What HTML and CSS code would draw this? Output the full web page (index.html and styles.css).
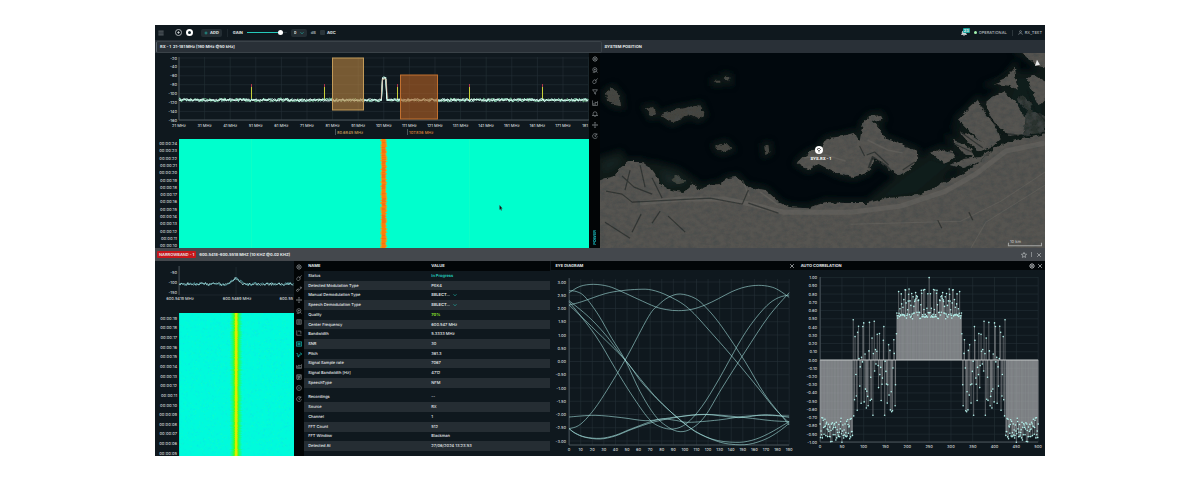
FILE: index.html
```html
<!DOCTYPE html>
<html lang="en">
<head>
<meta charset="utf-8">
<meta name="viewport" content="width=device-width, initial-scale=1">
<title>Spectrum monitor</title>
<link rel="stylesheet" href="styles.css">
</head>
<body>
<svg class="sprite" aria-hidden="true">
  <symbol id="i-gear" viewBox="0 0 16 16"><circle cx="8" cy="8" r="5.5"/><circle cx="8" cy="8" r="2.2"/><path d="M8 1v2M8 13v2M1 8h2M13 8h2M3 3l1.5 1.5M11.500 11.500L13 13M13 3l-1.500 1.500M4.500 11.500L3 13"/></symbol>
  <symbol id="i-zoom" viewBox="0 0 16 16"><circle cx="7.500" cy="7" r="5.500"/><path d="M11.500 11l3 4M2 14h7M7.500 4.500v5M5 7h5"/></symbol>
  <symbol id="i-sweep" viewBox="0 0 16 16"><path d="M15 1L9 8M9 5c-4-1-7 2-7 6 0 2 1 4 3 4 4 0 7-3 6-7z"/></symbol>
  <symbol id="i-filter" viewBox="0 0 16 16"><path d="M1.500 2h13L9.500 8.500V14l-3-2V8.500z"/></symbol>
  <symbol id="i-chart" viewBox="0 0 16 16"><path d="M1.500 1v13.500H15M5 14V8M8.500 14V5l3 3 3-4v10"/></symbol>
  <symbol id="i-bell" viewBox="0 0 16 16"><path d="M3 12V7a5 5 0 0 1 10 0v5h2H1zM6 15h4"/></symbol>
  <symbol id="i-move" viewBox="0 0 16 16"><path d="M8 1v14M1 8h14M6 3l2-2 2 2M6 13l2 2 2-2M3 6L1 8l2 2M13 6l2 2-2 2"/></symbol>
  <symbol id="i-reset" viewBox="0 0 16 16"><path d="M13 4A6.500 6.500 0 1 0 14.500 9M13 1v4H9M8 5v4h3"/></symbol>
  <symbol id="i-tune" viewBox="0 0 16 16"><path d="M1 12l5-5 3 4 5-8M10 3h4v4"/><circle cx="4" cy="12" r="2.500"/></symbol>
  <symbol id="i-list" viewBox="0 0 16 16"><path d="M2 2h12v12H2zM4 5h8M4 8h8M4 11h8"/></symbol>
  <symbol id="i-axes" viewBox="0 0 16 16"><path d="M2 1v13h13M5 3h8v7"/></symbol>
  <symbol id="i-eye" viewBox="0 0 16 16"><path d="M1 2h14v12H1zM1 5c6 0 8 6 14 6M1 11c6 0 8-6 14-6M8 2v12"/></symbol>
  <symbol id="i-link" viewBox="0 0 16 16"><path d="M1 4h3l3 9 4-8h4M11 1l4 4M3 9l4 5M12 9l3-3"/></symbol>
  <symbol id="i-bars" viewBox="0 0 16 16"><path d="M1 14h14V4l-4 4-3-3-3 4-4-2zM5 14v-4M8 14V7M11 14v-4"/></symbol>
  <symbol id="i-grid" viewBox="0 0 16 16"><path d="M2 2h12v12H2zM2 8h12M8 2v12M4 15l9-12M3 4l4 3"/></symbol>
  <symbol id="i-minus" viewBox="0 0 16 16"><circle cx="8" cy="8" r="6.500"/><path d="M4.500 8h7"/></symbol>
  <symbol id="i-x" viewBox="0 0 16 16"><path d="M3 3l10 10M13 3L3 13"/></symbol>
  <symbol id="i-down" viewBox="0 0 16 16"><path d="M2 5l6 6 6-6"/></symbol>
  <symbol id="i-user" viewBox="0 0 16 16"><circle cx="8" cy="5" r="3"/><path d="M2 15c0-4 3-5 6-5s6 1 6 5"/></symbol>
  <symbol id="i-menu" viewBox="0 0 16 16"><path d="M1 3h14M1 8h14M1 13h14"/></symbol>
  <symbol id="i-plus" viewBox="0 0 16 16"><path d="M8 2v12M2 8h12"/></symbol>
  <symbol id="i-add" viewBox="0 0 16 16"><circle cx="8" cy="8" r="7"/><path d="M8 5v6M5 8h6"/></symbol>
  <symbol id="i-star" viewBox="0 0 16 16"><path d="M8 1l2 4.500 5 .5-4 3.500 1.200 5L8 12l-4.200 2.500L5 9.500 1 6l5-.5z"/></symbol>
</svg>

<main class="app">
  <header class="topbar">
    <button class="btn menu" aria-label="Menu"><svg class="ic dim"><use href="#i-menu"/></svg></button>
    <div class="transport">
      <button class="btn" aria-label="New receiver"><svg class="ic l"><use href="#i-add"/></svg></button>
      <button class="btn stop" aria-label="Stop"></button>
    </div>
    <button class="btn add"><svg class="ic s teal"><use href="#i-plus"/></svg>ADD</button>
    <div class="gain">
      <label for="gain">GAIN</label>
      <input id="gain" class="slider" type="range" min="0" max="100" value="90">
      <div class="pick boxed"><select aria-label="Gain in dB"><option>0</option></select><svg class="ic s teal"><use href="#i-down"/></svg></div>
      <span class="muted">dB</span>
      <label class="agc"><input type="checkbox">AGC</label>
    </div>
    <div class="status">
      <button class="btn alerts" aria-label="Notifications"><svg class="ic"><use href="#i-bell"/></svg><span class="badge">23</span></button>
      <span class="online">OPERATIONAL</span>
      <span class="user"><svg class="ic"><use href="#i-user"/></svg>RX_TEST</span>
    </div>
  </header>

  <div class="strip">
    <h2 class="rx">RX - 1&nbsp; 21-181 MHz [160 MHz @50 kHz]</h2>
    <h2 class="pos">SYSTEM POSITION</h2>
  </div>

  <section class="upper">
    <div class="wide">
      <svg class="plot" id="wide" viewBox="0 0 434 195" role="img" aria-label="Wideband spectrum and waterfall"></svg>
      <nav class="tools">
        <button class="btn" aria-label="Settings"><svg class="ic"><use href="#i-gear"/></svg></button>
        <button class="btn" aria-label="Zoom"><svg class="ic"><use href="#i-zoom"/></svg></button>
        <button class="btn" aria-label="Clear"><svg class="ic"><use href="#i-sweep"/></svg></button>
        <button class="btn" aria-label="Filter"><svg class="ic"><use href="#i-filter"/></svg></button>
        <button class="btn" aria-label="Chart"><svg class="ic"><use href="#i-chart"/></svg></button>
        <button class="btn" aria-label="Alarm"><svg class="ic"><use href="#i-bell"/></svg></button>
        <button class="btn" aria-label="Move"><svg class="ic"><use href="#i-move"/></svg></button>
        <button class="btn" aria-label="Reset"><svg class="ic"><use href="#i-reset"/></svg></button>
        <button class="btn power">POWER</button>
      </nav>
    </div>
    <svg class="map" viewBox="600 53 444 195" preserveAspectRatio="xMidYMid slice" role="img" aria-label="Satellite map">
      <defs>
        <filter id="ground" x="-5%" y="-5%" width="110%" height="110%">
          <feTurbulence type="fractalNoise" baseFrequency=".16 .22" numOctaves="4" seed="8" result="n"/>
          <feDisplacementMap in="SourceGraphic" in2="n" scale="5" xChannelSelector="R" yChannelSelector="G" result="d"/>
          <feColorMatrix in="n" type="matrix" values="0 0 0 0 0.06  0 0 0 0 .07  0 0 0 0 .07  1.400 0 0 0 -.5" result="k"/>
          <feComposite in="k" in2="d" operator="in" result="t"/>
          <feMerge result="m"><feMergeNode in="d"/><feMergeNode in="t"/></feMerge>
          <feGaussianBlur in="m" stdDeviation=".35"/>
        </filter>
        <filter id="soft" x="-20%" y="-20%" width="140%" height="140%"><feGaussianBlur stdDeviation="3"/></filter>
        <filter id="fine"><feGaussianBlur stdDeviation=".6"/></filter>
        <path id="coast" d="M596 182L606 178 615 176 620 168 628 162 642 162 649 167 655 175 660 184 670 190 683 192 689 188 693 183 698 190 710 185 719 184 728 178 737 177 741 182 747 187 765 190 772 196 778 202 788 207 808 208 825 202 845 203 867 203 887 198 917 195 930 189 943 183 958 176 980 161 993 148 1007 142 1050 133V252H596z"/>
        <path id="isle" d="M797 163L803 157 810 152 820 148 824 141 830 138 842 136 853 133 859 142 861 130 863 122 870 116 880 115 882 119 872 121 878 127 883 138 895 142 907 147 916 151 917 159 910 169 900 175 888 169 873 158 870 169 865 173 853 177 838 174 830 170 818 164 808 170z"/>
        <path id="north" d="M957 119L965 111 977 100 981 108 990 120 997 131 1000 139 990 148 983 144 972 134zM984 104L992 97 1002 92 1014 101 1022 114 1028 122 1024 134 1008 136 994 124zM993 84L1003 80 1013 68 1014 76 1017 90 1008 86zM1026 78L1032 75 1048 84V95L1038 106 1033 96zM1020 53L1050 50V69L1036 66 1028 58z"/>
        <path id="piers" d="M930 153L940 149 952 152 954 159 943 164zM951 140L960 142 970 149 974 158 962 153zM958 131L972 136 990 148 980 152 968 143zM950 165L962 159 980 157 992 149 978 162 963 168z"/>
        <path id="islets" d="M606 92L613 88 620 96 621 106 614 105 607 100zM646 108L653 107 656 114 651 117zM660 115L674 110 684 108 700 105 704 115 698 119 690 115 680 119 672 123zM714 81h6v2h-6zM725 76l4 1v5l-4-2zM715 146l10-3 6 6-8 3-6-2zM764 146l4-1 1 7-4 2z"/>
      </defs>
      <rect x="595" y="48" width="454" height="205" fill="#01080d"/>
      <g filter="url(#soft)" fill="#182523" stroke="#14211f" stroke-width="7" opacity=".7">
        <use href="#coast"/><use href="#isle"/><use href="#north"/><use href="#piers"/>
        <use href="#islets" stroke-width="7"/>
        <path d="M867 203l40-32 30-20 20 10-40 34z"/>
        <path d="M1015 75l29 0v58l-20 8-25-20z"/>
        <path d="M655 165l22 6 20 14-34 4zM600 160l20-6 5 10-25 14z" fill="#20302d"/>
      </g>
      <g filter="url(#ground)" fill="#575551">
        <use href="#coast"/><use href="#isle"/><use href="#north"/><use href="#piers"/>
        <use href="#islets" fill="#45443f"/>
        <path d="M670 180l6-5 10 7-8 2z" fill="#3d423b"/>
        <path d="M1026 108l18 8v16l-22 4zM1020 94l12 10-4 8-12-12z" fill="#2b302e"/>
      </g>
      <g fill="none" stroke="#706d67" stroke-width="1.500" opacity=".4" filter="url(#fine)" stroke-linejoin="round">
        <path d="M640 203L680 199 725 199 750 204 783 212 815 212 850 212 900 206 945 191 975 174 1005 151 1044 143" stroke-width="5"/>
        <path d="M850 224L960 221 1000 201 1044 172M1044 185L985 222 970 248" stroke-width="1"/>
        <path d="M804 158L825 155 845 161M867 140l20 10 15 3"/>
        <path d="M742 180l7 16M760 192l18 13"/>
      </g>
      <g fill="none" stroke="#101716" stroke-width="1.200" opacity=".5" filter="url(#fine)" stroke-linejoin="round">
        <path d="M606 191L622 194 632 202 710 198 742 204 748 190M668 216l17 16M605 222l25 16M641 214l-9 18M622 176l12 11 18 7M630 170l-5 20M640 165l5 22M652 178l10 20M748 203l30 10"/>
        <path d="M868 168l4-11 14 9 8 9" stroke-width="2"/>
        <path d="M866 155l8-3 14 13M902 170l12-8M859 146l5 10M930 160l14 4 16-5M938 148l20 7M950 142l23 11M957 130l25 18M1026 90l8 20 14 15"/>
        <path d="M980 104l20 29 20 3M993 80l20-14" stroke-width="2"/>
        <path d="M937 220l4 8M968 212l4 8M660 211l-8 12"/>
      </g>
      <path d="M1034 66l2-6 3 5z" fill="#e8eaea"/>
      <circle cx="818.500" cy="150" r="4" fill="#fff"/>
      <path d="M816.500 149l2 2 2-2M818.500 151v1.500M817 148.500h2.500" fill="none" stroke="#333" stroke-width=".7"/>
      <text x="810" y="159.500" class="mark">SYS.RX - 1</text>
      <path d="M1007.500 242.500v3h33v-3" fill="none" stroke="#a5a7a5" stroke-width="1"/>
      <text x="1009" y="242.500" class="scale">10 km</text>
    </svg>
  </section>

  <div class="strip narrowhead">
    <span class="tag">NARROWBAND - 1</span>
    <h2>600.5418-600.5518 MHZ [10 KHZ @0.02 KHZ]</h2>
    <div class="winbtns">
      <button class="btn" aria-label="Favourite"><svg class="ic"><use href="#i-star"/></svg></button>
      <span class="bar"></span>
      <button class="btn" aria-label="Close"><svg class="ic"><use href="#i-x"/></svg></button>
    </div>
  </div>

  <section class="lower">
    <svg class="plot" id="narrow" viewBox="0 0 139 195" role="img" aria-label="Narrowband spectrum and waterfall"></svg>
    <nav class="tools tight">
      <button class="btn" aria-label="Settings"><svg class="ic"><use href="#i-gear"/></svg></button>
      <button class="btn" aria-label="Clear"><svg class="ic"><use href="#i-sweep"/></svg></button>
      <button class="btn" aria-label="Tune"><svg class="ic"><use href="#i-tune"/></svg></button>
      <button class="btn" aria-label="Move"><svg class="ic"><use href="#i-move"/></svg></button>
      <button class="btn" aria-label="Zoom"><svg class="ic"><use href="#i-zoom"/></svg></button>
      <button class="btn" aria-label="Info"><svg class="ic"><use href="#i-list"/></svg></button>
      <button class="btn" aria-label="Axes"><svg class="ic"><use href="#i-axes"/></svg></button>
      <button class="btn on" aria-label="Eye diagram"><svg class="ic"><use href="#i-eye"/></svg></button>
      <button class="btn on" aria-label="Correlation"><svg class="ic"><use href="#i-link"/></svg></button>
      <button class="btn" aria-label="Histogram"><svg class="ic"><use href="#i-bars"/></svg></button>
      <button class="btn" aria-label="Constellation"><svg class="ic"><use href="#i-grid"/></svg></button>
      <button class="btn" aria-label="Mute"><svg class="ic"><use href="#i-minus"/></svg></button>
      <button class="btn" aria-label="Reset"><svg class="ic"><use href="#i-reset"/></svg></button>
    </nav>
    <table class="info">
      <thead><tr><th scope="col">NAME</th><th scope="col">VALUE</th></tr></thead>
      <tbody>
        <tr><td>Status</td><td class="teal strong">In Progress</td></tr>
        <tr><td>Detected Modulation Type</td><td>PSK4</td></tr>
        <tr><td><label for="md">Manual Demodulation Type</label></td><td class="pick"><select id="md"><option>SELECT...</option></select><svg class="ic s teal"><use href="#i-down"/></svg></td></tr>
        <tr><td><label for="sd">Speech Demodulation Type</label></td><td class="pick"><select id="sd"><option>SELECT...</option></select><svg class="ic s teal"><use href="#i-down"/></svg></td></tr>
        <tr><td>Quality</td><td class="lime strong">70%</td></tr>
        <tr><td>Center Frequency</td><td>600.547 MHz</td></tr>
        <tr><td>Bandwidth</td><td>5.3333 MHz</td></tr>
        <tr><td>SNR</td><td>30</td></tr>
        <tr><td>Pitch</td><td>361.3</td></tr>
        <tr><td>Signal Sample rate</td><td>7067</td></tr>
        <tr><td>Signal Bandwidth [Hz]</td><td>4712</td></tr>
        <tr><td>SpeechType</td><td>NFM</td></tr>
        <tr class="gap"><td>Recordings</td><td>--</td></tr>
        <tr><td>Source</td><td>RX</td></tr>
        <tr><td>Channel</td><td>1</td></tr>
        <tr><td>FFT Count</td><td>512</td></tr>
        <tr><td>FFT Window</td><td>Blackman</td></tr>
        <tr><td>Detected At</td><td>27/06/2024 13:23:53</td></tr>
      </tbody>
    </table>
    <article class="panel">
      <header><h3>EYE DIAGRAM</h3><button class="btn" aria-label="Close"><svg class="ic"><use href="#i-x"/></svg></button></header>
      <svg class="plot" id="eye" viewBox="0 0 245 186" role="img" aria-label="Eye diagram"></svg>
    </article>
    <article class="panel">
      <header><h3>AUTO CORRELATION</h3><button class="btn" aria-label="Settings"><svg class="ic"><use href="#i-gear"/></svg></button><button class="btn" aria-label="Close"><svg class="ic"><use href="#i-x"/></svg></button></header>
      <svg class="plot" id="auto" viewBox="0 0 248 186" role="img" aria-label="Auto correlation"></svg>
    </article>
  </section>
</main>
<script src="charts.js"></script>
</body>
</html>
```

FILE: styles.css
```css
* { box-sizing: border-box; }

body {
  margin: 0;
  padding: 25px 155px;
  background: #fff;
  color: #e4e8ea;
  font: 500 4px/6px Inter, "Liberation Sans", sans-serif;
  text-rendering: geometricPrecision;
}

h2, h3 { margin: 0; font-size: 4px; line-height: 6px; font-weight: 700; }

.sprite { display: none; }

.app {
  display: grid;
  grid-template-rows: 15px 13px minmax(0, 1fr) 13px minmax(0, 1fr);
  height: calc(100vh - 50px);
  min-height: 320px;
  background: #0f181e;
}

.btn {
  display: flex;
  align-items: center;
  justify-content: center;
  padding: 0;
  border: 0;
  background: none;
  color: inherit;
  font: inherit;
  text-rendering: inherit;
  cursor: pointer;
}

.ic {
  flex: none;
  width: 6px;
  height: 6px;
  fill: none;
  stroke: currentColor;
  stroke-width: 1.6;
}
.ic.s { width: 4px; height: 4px; stroke-width: 2.400; }
.ic.l { width: 7px; height: 7px; }
.teal { color: #22c3b6; }
.lime { color: #8be32a; }
.dim, .muted { color: #98a0a4; }
.strong { font-weight: 700; }

/* Top bar */
.topbar { display: flex; align-items: center; padding: 0 3px; }
.menu { margin-right: 11px; }
.transport { display: flex; gap: 4px; align-items: center; padding-right: 8px; }
.stop { width: 7px; height: 7px; border: 2px solid #fff; border-radius: 50%; background: #14242b; }
.add { gap: 2px; padding: 0 3px; height: 8px; border-radius: 2px; background: #232d33; font-weight: 700; }
.gain { display: flex; align-items: center; gap: 4px; margin-left: 5px; padding-left: 5px; border-left: 1px solid #1d272d; font-weight: 700; }

.slider { appearance: none; width: 40px; height: 5px; margin: 0; background: linear-gradient(#25c9ba, #25c9ba) 0 50% / 34px 1px no-repeat, linear-gradient(#27343a, #27343a) 0 50% / 100% 1px no-repeat; }
.slider::-webkit-slider-thumb { appearance: none; width: 5px; height: 5px; border-radius: 50%; background: #fff; }

.pick { display: flex; align-items: center; gap: 3px; }
.pick select { appearance: none; border: 0; padding: 0; margin: 0; background: none; color: inherit; font: inherit; font-weight: 600; text-rendering: inherit; }
.boxed { height: 8px; padding: 0 3px; border-radius: 2px; background: #232d33; }

.agc { display: flex; align-items: center; gap: 2px; }
.agc input { appearance: none; width: 5px; height: 5px; margin: 0; border-radius: 1px; background: #2a343a; }

.status { display: flex; align-items: center; margin-left: auto; }
.alerts { position: relative; margin-right: 7px; }
.alerts .ic { fill: #cfd5d6; }
.badge { position: absolute; left: 2px; top: -2px; padding: 0 1px; border-radius: 1px; background: #1ba39c; line-height: 5px; font-weight: 700; }
.online { display: flex; align-items: center; gap: 2px; padding-right: 5px; border-right: 1px solid #2c363b; color: #aeb5b8; }
.online::before { content: ""; width: 3px; height: 3px; border-radius: 50%; background: #a3f4b0; }
.user { display: flex; align-items: center; gap: 2px; padding-left: 5px; color: #aeb5b8; }
.user .ic { width: 5px; height: 5px; }

/* Title strips */
.strip { display: flex; align-items: center; background: #293037; }
.strip .rx, .strip .pos { flex: 1; padding: 2px 3px; }
.rx { border: 1px solid #3a4248; border-left-color: #59626a; border-radius: 2px; margin-left: 1px; }
.narrowhead { gap: 3px; padding: 0 3px 0 2px; background: #44484d; }
.tag { padding: 0 2px; height: 7px; line-height: 7px; border-radius: 1px; background: #c8161b; font-weight: 600; }
.winbtns { display: flex; align-items: center; gap: 4px; margin-left: auto; color: #c5c8ca; }
.bar { width: 1px; height: 5px; background: #85898c; }

/* Upper half */
.upper { display: grid; grid-template-columns: 1fr 1fr; min-height: 0; }
.wide { display: flex; min-width: 0; min-height: 0; }
.plot { flex: 1; display: block; min-width: 0; min-height: 0; width: 100%; height: 100%; }
.map { display: block; width: 100%; height: 100%; }

.tools { flex: none; display: flex; flex-direction: column; align-items: center; gap: 5px; width: 11px; padding: 3px 0; background: #020506; color: #969b9d; }
.tools.tight { width: 10px; }
.tools .on { color: #19c9c4; }
.power { margin-top: auto; writing-mode: vertical-rl; transform: rotate(180deg); color: #19b9bd; font-weight: 700; }

/* Lower half */
.lower { display: grid; grid-template-columns: 139fr 10px 247fr 245fr 248fr; min-height: 0; }

.info { display: flex; flex-direction: column; padding: 0 1px 5px 0; }
.info thead, .info tbody { display: grid; }
.info thead { height: 10px; background: #020608; }
.info tbody { flex: 1; grid-auto-rows: 1fr; grid-template-rows: repeat(12, 1fr) 1.5fr; }
.info tr { display: grid; grid-template-columns: 31fr 30fr; align-items: center; padding-left: 4px; }
.info tbody tr:nth-child(even) { background: #252d33; }
.info tr.gap { align-items: end; padding-bottom: 2px; }
.info th, .info td { padding: 0; text-align: left; }

.panel { display: flex; flex-direction: column; min-width: 0; min-height: 0; }
.panel header { display: flex; align-items: center; gap: 2px; height: 9px; flex: none; padding: 0 2px 0 4px; background: #020608; }
.panel h3 { flex: 1; }

/* Chart parts */
.plot text { font-size: 4px; fill: #ccd2d4; }
.end { text-anchor: end; }
.mid { text-anchor: middle; }
.grid { stroke: #243037; stroke-width: 1; fill: none; opacity: .6; }
.axis { stroke: #4a555b; stroke-width: 1; fill: none; }
.eyeline { fill: none; stroke: #a4e0dd; stroke-width: .8; opacity: .75; }
.stem { fill: none; stroke: #a8aaac; stroke-width: .6; opacity: .8; }
.zero { stroke: #c4c8c8; stroke-width: 1; }
.dot { fill: #b4f4ee; }
.plot .amber { fill: #c99c58; }
.plot .orange { fill: #dd8038; }
.mark { font-size: 4px; fill: #fff; font-weight: 700; }
.scale { font-size: 4px; fill: #b9bbb8; }
```

FILE: charts.js
```js
function random(seed) {
  let a = seed;
  return () => {
    a = (a + 0x6d2b79f5) | 0;
    let t = Math.imul(a ^ (a >>> 15), 1 | a);
    t = (t + Math.imul(t ^ (t >>> 7), 61 | t)) ^ t;
    return ((t ^ (t >>> 14)) >>> 0) / 4294967296;
  };
}
const line = (cls, x1, y1, x2, y2) =>
  `<line class="${cls}" x1="${x1}" y1="${y1}" x2="${x2}" y2="${y2}"/>`;
const text = (cls, x, y, s) => `<text class="${cls}" x="${x}" y="${y}">${s}</text>`;
const rect = (x, y, w, h, fill, extra = "") =>
  `<rect x="${x}" y="${y}" width="${w}" height="${h}" fill="${fill}" ${extra}/>`;
const trace = (pts, color, w) =>
  `<path d="M${pts.map(p => p.map(v => v.toFixed(1)).join(" ")).join("L")}" fill="none" stroke="${color}" stroke-width="${w}"/>`;
const clock = n => "00:00:" + String(n).padStart(2, "0");

function wideband() {
  const r = random(7);
  let out = "";
  for (let i = 0; i < 8; i++) {
    const y = 5 + i * 8.9;
    out += line("grid", 24, y, 433, y) + text("end", 22, y + 1.5, -20 - i * 20);
  }
  for (let i = 0; i < 17; i++) {
    const x = 24 + i * 25.6;
    out += line("grid", x, 4, x, 67);
    out += i === 16 ? text("end", 433, 73.5, "181") : text("mid", x, 73.5, 21 + i * 10 + " MHz");
  }
  out += line("axis", 24, 4, 24, 67) + line("axis", 24, 67, 434, 67);
  for (const x of [96.5, 169.5, 242.5, 314.5, 387.5]) {
    out += line("", x, 33, x, 47).replace("/>", ' stroke="#c8cf3a"/>');
    out += line("", x, 31, x, 34).replace("/>", ' stroke="#a8324a"/>');
  }
  for (const [amp, color] of [[1.9, "#7fd9a0"], [1.6, "#a5f0d8"], [1.4, "#c9fff0"], [1.2, "#e9fffa"]]) {
    const pts = [];
    for (let x = 24; x <= 434; x += 1.1) {
      const peak = x > 227 && x < 231.5;
      pts.push([x, (peak ? 25 : 47) + (r() - 0.5) * 2 * amp]);
    }
    out += trace(pts, color, 0.8);
  }
  out += trace([[226, 46], [227.5, 26], [231, 26], [233, 46]], "#e08a70", 0.5);
  out += rect(177.5, 5, 31, 52, "#b88340", 'fill-opacity=".62" stroke="#c29a58" stroke-width="1"');
  out += rect(245.5, 22, 37, 44, "#ae5e24", 'fill-opacity=".64" stroke="#c2702f" stroke-width="1"');
  out += line("axis", 180.5, 76, 180.5, 82) + text("amber", 182, 80.5, "80.6845 MHz");
  out += line("axis", 252.5, 76, 252.5, 82) + text("orange", 254, 80.5, "107.836 MHz");
  out += rect(24, 86, 410, 109, "#00ffcd");
  out += rect(96, 86, 1, 109, "#24ffbe", 'opacity=".35"') + rect(314, 86, 1, 109, "#24ffbe", 'opacity=".35"');
  for (let y = 86; y < 195; y++) {
    const a = r() * 1.4, b = r() * 1.4;
    out += rect(226.4 - a, y, 4.6 + a + b, 1, "#b5b545") + rect(227.2 - a / 2, y, 3 + a / 2 + b / 2, 1, r() > 0.5 ? "#f96f10" : "#ff7e08");
  }
  for (let i = 0; i < 15; i++) out += text("end", 22, 92 + i * 7.3, clock(24 - i));
  out += '<path d="M344.500 152l3 3.500-1.300.1.600 1.700-.8.200-.6-1.600-.9.800z" fill="#101010" stroke="#7a9a90" stroke-width=".2"/>';
  document.getElementById("wide").innerHTML = out;
}

function narrowband() {
  const r = random(21);
  let out = "";
  [["-50", 11], ["-100", 21], ["-150", 31]].forEach(([s, y]) => { out += text("end", 22, y + 1.5, s); });
  out += line("axis", 24, 5, 24, 34) + line("grid", 24, 34, 139, 34) + line("grid", 81, 6, 81, 34);
  for (const color of ["#5fb9be", "#b5ecec"]) {
    const pts = [];
    for (let x = 24; x <= 139; x += 1.1) {
      const d = Math.abs(x - 81);
      const y = d < 6 ? 17 + d * 0.8 : 23;
      pts.push([x, y + (r() - 0.5) * 3.2]);
    }
    out += trace(pts, color, 0.7);
  }
  out += text("mid", 25, 38.5, "600.5419 MHz") + text("mid", 82, 38.5, "600.5469 MHz") + text("end", 138, 38.5, "600.55");
  out += `<defs><linearGradient id="fall"><stop offset="0" stop-color="#00fbdc"/><stop offset=".25" stop-color="#19ff75"/>
    <stop offset=".36" stop-color="#45ff1a"/><stop offset=".44" stop-color="#d6ef00"/><stop offset=".56" stop-color="#e9e400"/>
    <stop offset=".66" stop-color="#45ff1a"/><stop offset=".77" stop-color="#19ff75"/><stop offset="1" stop-color="#00fbdc"/></linearGradient></defs>`;
  out += rect(24, 52, 115, 144, "#00fbdc");
  for (let i = 0; i < 2600; i++) {
    out += rect((24 + r() * 114).toFixed(1), (52 + r() * 142).toFixed(1), 1, 1, r() > 0.45 ? "#10e4ea" : "#18ffc0", 'opacity=".45"');
  }
  for (let y = 52; y < 195; y += 1) {
    const a = r() * 1.5;
    out += rect((75.5 - a).toFixed(1), y, (11 + a * 2).toFixed(1), 1, "url(#fall)");
  }
  for (let i = 0; i < 15; i++) out += text("end", 22, (58.7 + i * 9.64).toFixed(1), clock(19 - i));
  document.getElementById("narrow").innerHTML = out;
}

/* Smooth path through the points (Catmull-Rom to Bezier). */
function spline(p) {
  let d = `M${p[0]}`;
  for (let i = 0; i < p.length - 1; i++) {
    const a = p[i - 1] || p[i], b = p[i], c = p[i + 1], e = p[i + 2] || c;
    d += `C${b[0] + (c[0] - a[0]) / 6} ${b[1] + (c[1] - a[1]) / 6} ${c[0] - (e[0] - b[0]) / 6} ${c[1] - (e[1] - b[1]) / 6} ${c[0]} ${c[1]}`;
  }
  return d;
}

function eyeDiagram() {
  const traces = [
    [72,143,105,124,145,118,190,124,230,140,280,163,330,185,365,194,400,197,440,193,480,180,520,161,560,140,600,126,640,121,675,125,700,135,732,157],
    [72,180,110,170,180,146,230,137,280,133,320,135,370,153,430,190,500,265,570,345,640,430,690,492,732,533],
    [72,551,100,542,130,514,170,460,240,345,310,215,340,180,370,157,405,147,450,160,485,190,530,245,600,350,660,450,732,540],
    [72,137,95,140,120,156,160,210,200,280,240,345,285,440,330,512,370,547,405,560,440,550,480,513,530,430,600,320,670,215,732,143],
    [72,170,150,270,210,370,260,450,310,520,345,545,385,552,425,535,470,485,520,405,580,297,620,235,665,182,700,158,732,150],
    [72,167,130,215,180,268,240,345,340,465,430,545,470,570,520,590,560,598,610,598,660,583,700,560,732,535],
    [72,180,150,255,240,345,290,412,350,475,430,545,500,582,570,592,620,586,670,566,732,530],
    [72,551,90,565,120,577,165,582,210,573,260,553,330,530,420,513,500,509,600,518,680,527,732,530],
    [72,551,90,564,120,576,165,580,210,571,260,551,340,523,390,526,430,532,520,525,620,512,732,513],
    [72,516,150,511,230,518,300,527,350,522,400,515,480,508,580,518,660,509,732,517]
  ];
  let out = "";
  for (let i = 0; i < 13; i++) {
    const y = 12 + i * 13.25;
    out += line("grid", 18, y, 238, y) + text("end", 15, y + 1.5, (3 - i * 0.5).toFixed(2));
  }
  for (let i = 0; i < 20; i++) {
    const x = 18 + i * 11.58;
    out += line("grid", x, 9, x, 175) + text("mid", x, 181, i * 10);
  }
  out += line("axis", 18, 8, 18, 175) + line("axis", 18, 175, 238, 175);
  for (const t of traces) {
    const p = [];
    for (let i = 0; i < t.length; i += 2) p.push([t[i] / 3 - 6, t[i + 1] / 3 - 25]);
    out += `<path class="eyeline" d="${spline(p)}"/>`;
  }
  document.getElementById("eye").innerHTML = out;
}

function autoCorrelation() {
  const r = random(99);
  const X = n => 23 + n * 0.436;
  const Y = v => 90 - v * 82.4;
  const half = [];
  for (let n = 0; n < 250; n++) {
    if (n < 75) half.push([n, -0.7 - r() * 0.3]);
    else if (n < 176) { if (n % 3) half.push([n, 0.5 - r() * 1.18]); }
    else half.push([n, r() > 0.6 ? 0.5 + r() * 0.08 : 0.52 + r() * 0.38]);
  }
  const data = [...half, [250, 1], ...half.map(([n, v]) => [500 - n, v])];
  let out = "";
  for (let i = 0; i < 21; i++) {
    const y = 7.6 + i * 8.24;
    out += line("grid", 23, y, 241, y) + text("end", 20, y + 1.5, (1 - i * 0.1).toFixed(2).replace("-0.00", "0.00"));
  }
  for (let i = 0; i < 11; i++) {
    const x = 23 + i * 21.8;
    out += line("grid", x, 7, x, 172) + text("mid", x, 178, i * 50);
  }
  out += line("axis", 23, 7, 23, 172) + line("axis", 23, 172, 241, 172);
  out += `<path class="stem" d="${data.map(([n, v]) => `M${X(n).toFixed(1)} 90V${Y(v).toFixed(1)}`).join("")}"/>`;
  out += line("zero", 23, 90, 241, 90);
  for (const [n, v] of data) {
    out += `<circle class="dot" cx="${X(n).toFixed(1)}" cy="${Y(v).toFixed(1)}" r=".8"/>`;
  }
  document.getElementById("auto").innerHTML = out;
}

wideband();
narrowband();
eyeDiagram();
autoCorrelation();
```
